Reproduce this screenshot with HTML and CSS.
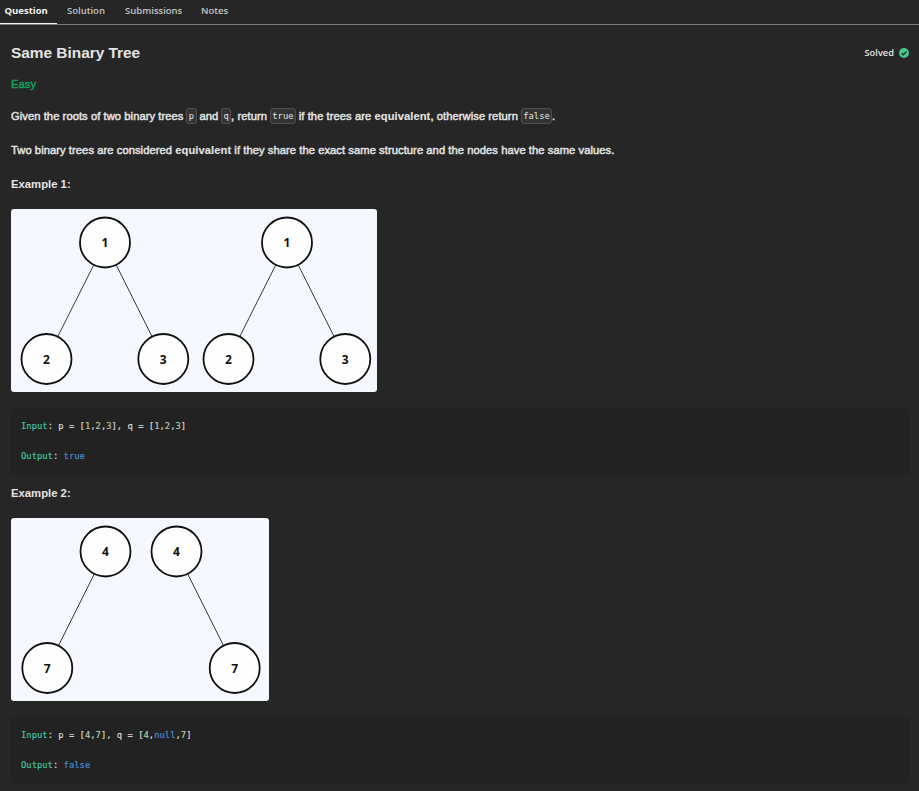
FILE: index.html
```html
<!DOCTYPE html>
<html lang="en">
<head>
<meta charset="utf-8">
<title>Same Binary Tree</title>
<link rel="stylesheet" href="styles.css">
</head>
<body>
<nav class="tabs">
  <a class="tab tab-active">Question</a>
  <a class="tab tab-solution">Solution</a>
  <a class="tab tab-submissions">Submissions</a>
  <a class="tab tab-notes">Notes</a>
</nav>
<main class="content">
  <header class="heading">
    <h1>Same Binary Tree</h1>
    <div class="solved"><span>Solved</span>
      <svg width="10" height="10" viewBox="0 0 10 10"><circle cx="5" cy="5" r="5" fill="#48c78e"/><path d="M2.6 5.2 4.3 6.8 7.5 3.5" fill="none" stroke="#262626" stroke-width="1.3"/></svg>
    </div>
  </header>
  <p class="difficulty">Easy</p>
  <p class="line">Given the roots of two binary trees <code>p</code> and <code>q</code>, return <code>true</code> if the trees are <b>equivalent</b>, otherwise return <code>false</code>.</p>
  <p class="line second">Two binary trees are considered <b>equivalent</b> if they share the exact same structure and the nodes have the same values.</p>
  <h2>Example 1:</h2>
  <svg class="figure" width="366" height="183" viewBox="0 0 366 183">
    <path class="edge" d="M94 33.5 35.5 150M94 33.5 152.3 150M276 33.5 217.5 150M276 33.5 334.3 150"/>
    <g class="node"><circle cx="94" cy="33.5" r="25"/><circle cx="35.5" cy="150" r="25"/><circle cx="152.3" cy="150" r="25"/><circle cx="276" cy="33.5" r="25"/><circle cx="217.5" cy="150" r="25"/><circle cx="334.3" cy="150" r="25"/></g>
    <g class="value"><text x="94" y="38">1</text><text x="35.5" y="154.5">2</text><text x="152.3" y="154.5">3</text><text x="276" y="38">1</text><text x="217.5" y="154.5">2</text><text x="334.3" y="154.5">3</text></g>
  </svg>
  <pre><i>Input</i>: p = [<u>1</u>,<u>2</u>,<u>3</u>], q = [<u>1</u>,<u>2</u>,<u>3</u>]

<i>Output</i>: <em>true</em></pre>
  <h2>Example 2:</h2>
  <svg class="figure" width="258" height="183" viewBox="0 0 258 183">
    <path class="edge" d="M94.5 33.5 36.3 150M165.5 33.5 223.7 150"/>
    <g class="node"><circle cx="94.5" cy="33.5" r="25"/><circle cx="165.5" cy="33.5" r="25"/><circle cx="36.3" cy="150" r="25"/><circle cx="223.7" cy="150" r="25"/></g>
    <g class="value"><text x="94.5" y="38">4</text><text x="165.5" y="38">4</text><text x="36.3" y="154.5">7</text><text x="223.7" y="154.5">7</text></g>
  </svg>
  <pre><i>Input</i>: p = [<u>4</u>,<u>7</u>], q = [<u>4</u>,<em>null</em>,<u>7</u>]

<i>Output</i>: <em>false</em></pre>
</main>
</body>
</html>
```
FILE: styles.css
```css
* { box-sizing: border-box; }
body {
  margin: 0;
  height: 791px;
  overflow: hidden;
  background: #262626;
  color: #e4e4e4;
  font: 11.2px/18px "Liberation Sans", sans-serif;
}
.tabs {
  display: flex;
  height: 25px;
  border-bottom: 1px solid #7a7a7a;
  font: 600 9.5px/22px "Open Sans", sans-serif;
  color: #c4c4c4;
}
.tab { height: 24px; padding: 0 10px; white-space: nowrap; }
.tab-active { width: 57px; padding-left: 4.5px; font-weight: 700; color: #f2f2f2; border-bottom: 1px solid #f2f2f2; }
.tab-solution { width: 58px; }
.tab-submissions { width: 76px; }
.content { padding: 16px 10px 0 11px; }
.heading { display: flex; justify-content: space-between; align-items: center; height: 24px; }
h1 { margin: 0; font-size: 15.4px; line-height: 24px; }
.solved { display: flex; align-items: center; gap: 5px; font: 600 9.3px/20px "Open Sans", sans-serif; }
p { margin: 0; white-space: nowrap; letter-spacing: .06px; -webkit-text-stroke: .45px currentColor; }
b { -webkit-text-stroke: .1px currentColor; }
.difficulty { margin-top: 10px; color: #0da45e; }
.line { margin-top: 14px; height: 18px; }
.second { margin-top: 16px; }
code {
  display: inline-block;
  height: 16px;
  margin: 0 -.35px;
  padding: 0 1.5px;
  border: 1px solid #505050;
  border-radius: 3px;
  background: #333;
  font: 8.8px/14px "DejaVu Sans Mono", monospace;
  letter-spacing: 0;
  vertical-align: 1px;
  -webkit-text-stroke: 0;
}
h2 { margin: 16px 0; font-size: 11.3px; line-height: 18px; }
.figure { display: block; border-radius: 3px; background: #f5f8fe; }
.edge { fill: none; stroke: #222; stroke-width: .9; }
.node { fill: #fefefe; stroke: #111; stroke-width: 1.8; }
.value { fill: #111; font: 700 12px "Open Sans", sans-serif; text-anchor: middle; }
pre {
  width: 898px;
  height: 67px;
  margin: 16px 0 0;
  padding: 11px 10px 9px;
  border-radius: 4px;
  background: #222;
  color: #dedede;
  font: 8.86px/15px "DejaVu Sans Mono", monospace;
  -webkit-text-stroke: .15px currentColor;
}
pre + h2 { margin-top: 9px; }
i { font-style: normal; color: #40c9a2; }
u { text-decoration: none; color: #b5cea8; }
em { font-style: normal; color: #4a8fd2; }
```
